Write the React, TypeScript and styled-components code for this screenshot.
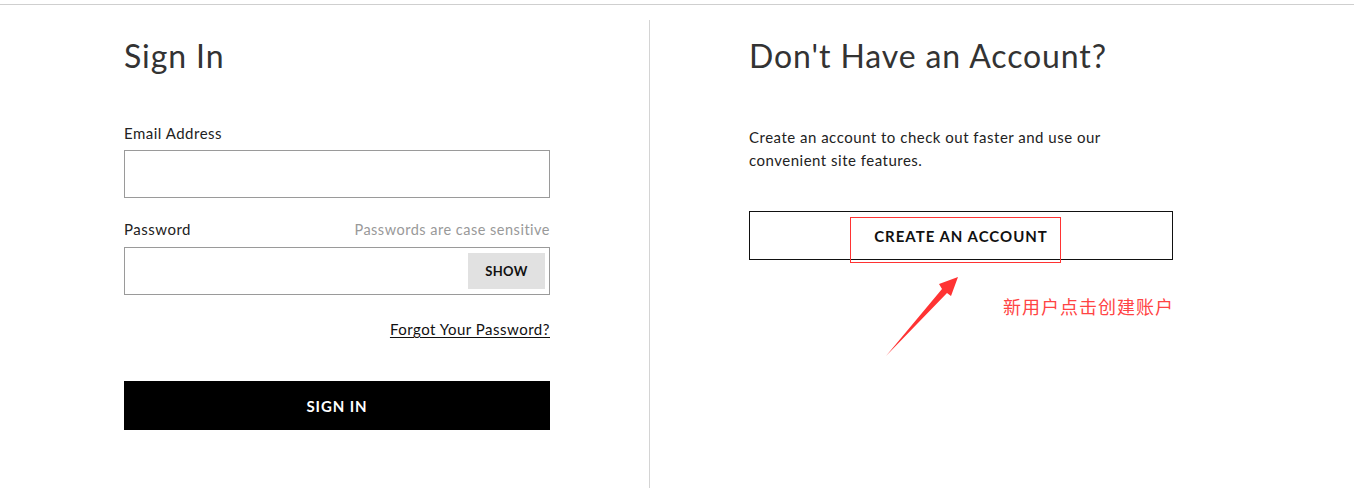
import * as React from 'react';
import styled, { createGlobalStyle } from 'styled-components';

const GlobalStyle = createGlobalStyle`
  html, body {
    margin: 0;
    padding: 0;
    background: #fff;
  }
  body {
    font-family: Lato, "Noto Sans", "Noto Sans CJK SC", sans-serif;
    color: #222;
    letter-spacing: 0.5px;
  }
`;

const Page = styled.div`
  width: 1354px;
  height: 488px;
  overflow: hidden;
  padding-top: 4px;
  box-sizing: border-box;
`;

const TopRule = styled.div`
  height: 1px;
  background: #cfcfcf;
`;

const Columns = styled.div`
  display: flex;
  margin-top: 15px;
  height: 469px;
`;

const LeftColumn = styled.section`
  width: 426px;
  padding: 0 99px 0 124px;
  flex: none;
`;

const RightColumn = styled.section`
  border-left: 1px solid #d4d4d4;
  padding-left: 99px;
  flex: 1;
`;

const Heading = styled.h1`
  margin: 16px 0 0;
  font-size: 32px;
  line-height: 40px;
  font-weight: 400;
  color: #333;
  letter-spacing: 0.9px;
`;

const Form = styled.form`
  display: flex;
  flex-direction: column;
  margin-top: 47px;
`;

const LabelRow = styled.div`
  display: flex;
  justify-content: space-between;
  align-items: baseline;
  font-size: 15px;
  line-height: 20px;
  margin-bottom: 7px;
`;

const Label = styled.label`
  color: #222;
`;

const Hint = styled.span`
  color: #999;
  font-size: 14.5px;
`;

const Field = styled.div<{ $spaced?: boolean }>`
  position: relative;
  height: 48px;
  border: 1px solid #9a9a9a;
  box-sizing: border-box;
  margin-bottom: ${({ $spaced }) => ($spaced ? '21px' : '0')};
`;

const Input = styled.input`
  width: 100%;
  height: 100%;
  border: none;
  outline: none;
  padding: 0 12px;
  box-sizing: border-box;
  font: inherit;
  background: transparent;
`;

const ShowButton = styled.button`
  position: absolute;
  right: 4px;
  top: 5px;
  width: 77px;
  height: 36px;
  border: none;
  background: #e1e1e1;
  font-family: inherit;
  font-size: 13px;
  font-weight: 700;
  letter-spacing: 0.4px;
  color: #111;
`;

const ForgotLink = styled.a`
  align-self: flex-end;
  margin-top: 24px;
  font-size: 15px;
  line-height: 20px;
  color: #111;
  text-decoration: underline;
  text-underline-offset: 2px;
`;

const PrimaryButton = styled.button`
  margin-top: 42px;
  height: 49px;
  border: none;
  background: #000;
  color: #fff;
  font-family: inherit;
  font-size: 15px;
  font-weight: 700;
  letter-spacing: 0.9px;
`;

const Copy = styled.p`
  margin: 50px 0 0;
  width: 370px;
  font-size: 15px;
  line-height: 23px;
  color: #222;
`;

const ButtonWrap = styled.div`
  position: relative;
  width: 424px;
  margin-top: 39px;
`;

const OutlineButton = styled.button`
  width: 100%;
  height: 49px;
  border: 1px solid #111;
  background: #fff;
  color: #111;
  font-family: inherit;
  font-size: 15px;
  font-weight: 700;
  letter-spacing: 1px;
`;

const Highlight = styled.div`
  position: absolute;
  left: 101px;
  top: 6px;
  width: 211px;
  height: 46px;
  border: 1px solid #f33;
  box-sizing: border-box;
  pointer-events: none;
`;

const Arrow = styled.svg`
  position: absolute;
  left: 129px;
  top: 60px;
  overflow: visible;
`;

const Note = styled.span`
  position: absolute;
  left: 254px;
  top: 83px;
  font-family: "Noto Sans CJK SC", sans-serif;
  font-size: 18px;
  line-height: 24px;
  letter-spacing: 1px;
  color: #f44;
  white-space: nowrap;
`;

export default function App() {
  return (
    <>
      <GlobalStyle />
      <Page>
        <TopRule />
        <Columns>
          <LeftColumn>
            <Heading>Sign In</Heading>
            <Form onSubmit={(e) => e.preventDefault()}>
              <LabelRow>
                <Label>Email Address</Label>
              </LabelRow>
              <Field $spaced>
                <Input type="email" />
              </Field>
              <LabelRow>
                <Label>Password</Label>
                <Hint>Passwords are case sensitive</Hint>
              </LabelRow>
              <Field>
                <Input type="password" />
                <ShowButton type="button">SHOW</ShowButton>
              </Field>
              <ForgotLink href="#">Forgot Your Password?</ForgotLink>
              <PrimaryButton type="submit">SIGN IN</PrimaryButton>
            </Form>
          </LeftColumn>
          <RightColumn>
            <Heading>Don't Have an Account?</Heading>
            <Copy>
              Create an account to check out faster and use our convenient site
              features.
            </Copy>
            <ButtonWrap>
              <OutlineButton type="button">CREATE AN ACCOUNT</OutlineButton>
              <Highlight />
              <Arrow width="85" height="90" viewBox="0 0 85 90">
                <path
                  d="M8 85 L64 18 L61 13 L80 6 L73 25 L69 22 Z"
                  fill="#f33"
                />
              </Arrow>
              <Note>新用户点击创建账户</Note>
            </ButtonWrap>
          </RightColumn>
        </Columns>
      </Page>
    </>
  );
}
